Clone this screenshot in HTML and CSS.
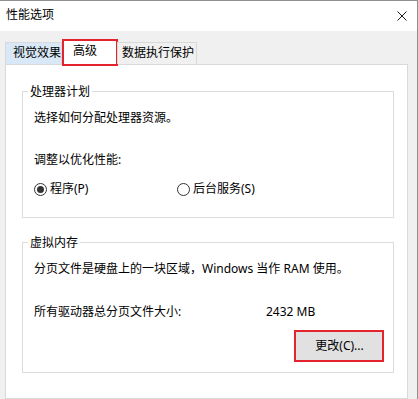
FILE: index.html
```html
<!DOCTYPE html>
<html lang="zh-CN">
<head>
<meta charset="utf-8">
<title>性能选项</title>
<link rel="stylesheet" href="styles.css">
</head>
<body>
<div class="window">
  <div class="titlebar">
    <span class="title">性能选项</span>
    <svg class="close" width="10" height="10" viewBox="0 0 10 10"><path d="M0.5 0.5L9.5 9.5M9.5 0.5L0.5 9.5" stroke="#1a1a1a" stroke-width="1" fill="none"/></svg>
  </div>
  <div class="content">
    <div class="tabs">
      <div class="tab tab-hover">视觉效果</div>
      <div class="tab tab-active">高级</div>
      <div class="tab tab-plain">数据执行保护</div>
    </div>
    <div class="panel">
      <div class="group group-cpu">
        <div class="legend">处理器计划</div>
        <div class="line l-first">选择如何分配处理器资源。</div>
        <div class="line l-second">调整以优化性能:</div>
        <div class="radios">
          <div class="radio-item first"><span class="radio checked"></span><span>程序(P)</span></div>
          <div class="radio-item"><span class="radio"></span><span>后台服务(S)</span></div>
        </div>
      </div>
      <div class="group group-mem">
        <div class="legend">虚拟内存</div>
        <div class="line l-first">分页文件是硬盘上的一块区域，Windows 当作 RAM 使用。</div>
        <div class="line l-size"><span class="size-label">所有驱动器总分页文件大小:</span><span>2432 MB</span></div>
        <div class="btn-row"><div class="button">更改(C)...</div></div>
      </div>
    </div>
  </div>
</div>
</body>
</html>
```
FILE: styles.css
```css
* { box-sizing: border-box; }
html, body { margin: 0; padding: 0; }
body {
  width: 418px;
  height: 399px;
  overflow: hidden;
  background: #ffffff;
  font-family: "Noto Sans", "Noto Sans CJK SC", sans-serif;
  font-size: 12px;
  color: #000000;
}
.window {
  width: 418px;
  height: 399px;
  border-top: 1px solid #8f8f8f;
  border-right: 1px solid #8f8f8f;
  display: flex;
  flex-direction: column;
}
.titlebar {
  height: 30px;
  flex: none;
  background: #ffffff;
  display: flex;
  align-items: center;
  justify-content: space-between;
  padding: 0 10px 2px 6px;
  line-height: 16px;
}
.close { display: block; margin-top: 1px; }
.content {
  flex: 1;
  background: #f0f0f0;
  padding: 11px 9px 0 5px;
  display: flex;
  flex-direction: column;
}
.tabs {
  display: flex;
  height: 22px;
  flex: none;
  align-items: flex-start;
  position: relative;
  z-index: 2;
}
.tab {
  height: 22px;
  line-height: 20px;
  border: 1px solid #d9d9d9;
  border-bottom: none;
  white-space: nowrap;
}
.tab-hover {
  width: 57px;
  padding-left: 7px;
  background: #d9e8f6;
}
.tab-active {
  width: 56px;
  height: 27px;
  margin-top: -3px;
  border: 2px solid #e3232d;
  background: #ffffff;
  padding-left: 9px;
  line-height: 20px;
}
.tab-plain {
  width: 80px;
  margin-left: -1px;
  padding-left: 4px;
  background: #f0f0f0;
}
.panel {
  flex: 1;
  background: #ffffff;
  border: 1px solid #d9d9d9;
  padding: 26px 13px 0 16px;
  display: flex;
  flex-direction: column;
}
.group {
  border: 1px solid #dcdcdc;
  padding: 0 0 0 11px;
  flex: none;
}
.group-cpu { height: 127px; }
.group-mem { height: 131px; margin-top: 24px; padding-right: 9px; }
.legend {
  margin: -8px 0 0 -6px;
  padding: 0 2px;
  width: fit-content;
  background: #ffffff;
  height: 16px;
  line-height: 16px;
}
.line { height: 16px; line-height: 16px; white-space: nowrap; }
.l-first { margin-top: 10px; }
.l-second { margin-top: 26px; }
.radios {
  display: flex;
  height: 16px;
  line-height: 16px;
  margin-top: 13px;
}
.radio-item { display: flex; align-items: center; }
.radio-item.first { width: 143px; }
.radio {
  width: 13px;
  height: 13px;
  border: 1px solid #333333;
  border-radius: 50%;
  margin-right: 3px;
  display: flex;
  align-items: center;
  justify-content: center;
}
.radio.checked::after {
  content: "";
  width: 7px;
  height: 7px;
  border-radius: 50%;
  background: #333333;
}
.l-size { margin-top: 27px; display: flex; }
.size-label { width: 232px; }
.btn-row {
  display: flex;
  justify-content: flex-end;
  margin-top: 10px;
}
.button {
  width: 90px;
  height: 32px;
  border: 2px solid #e3232d;
  background: #e1e1e1;
  display: flex;
  align-items: center;
  justify-content: center;
  line-height: 16px;
  padding-left: 1px;
}
```
